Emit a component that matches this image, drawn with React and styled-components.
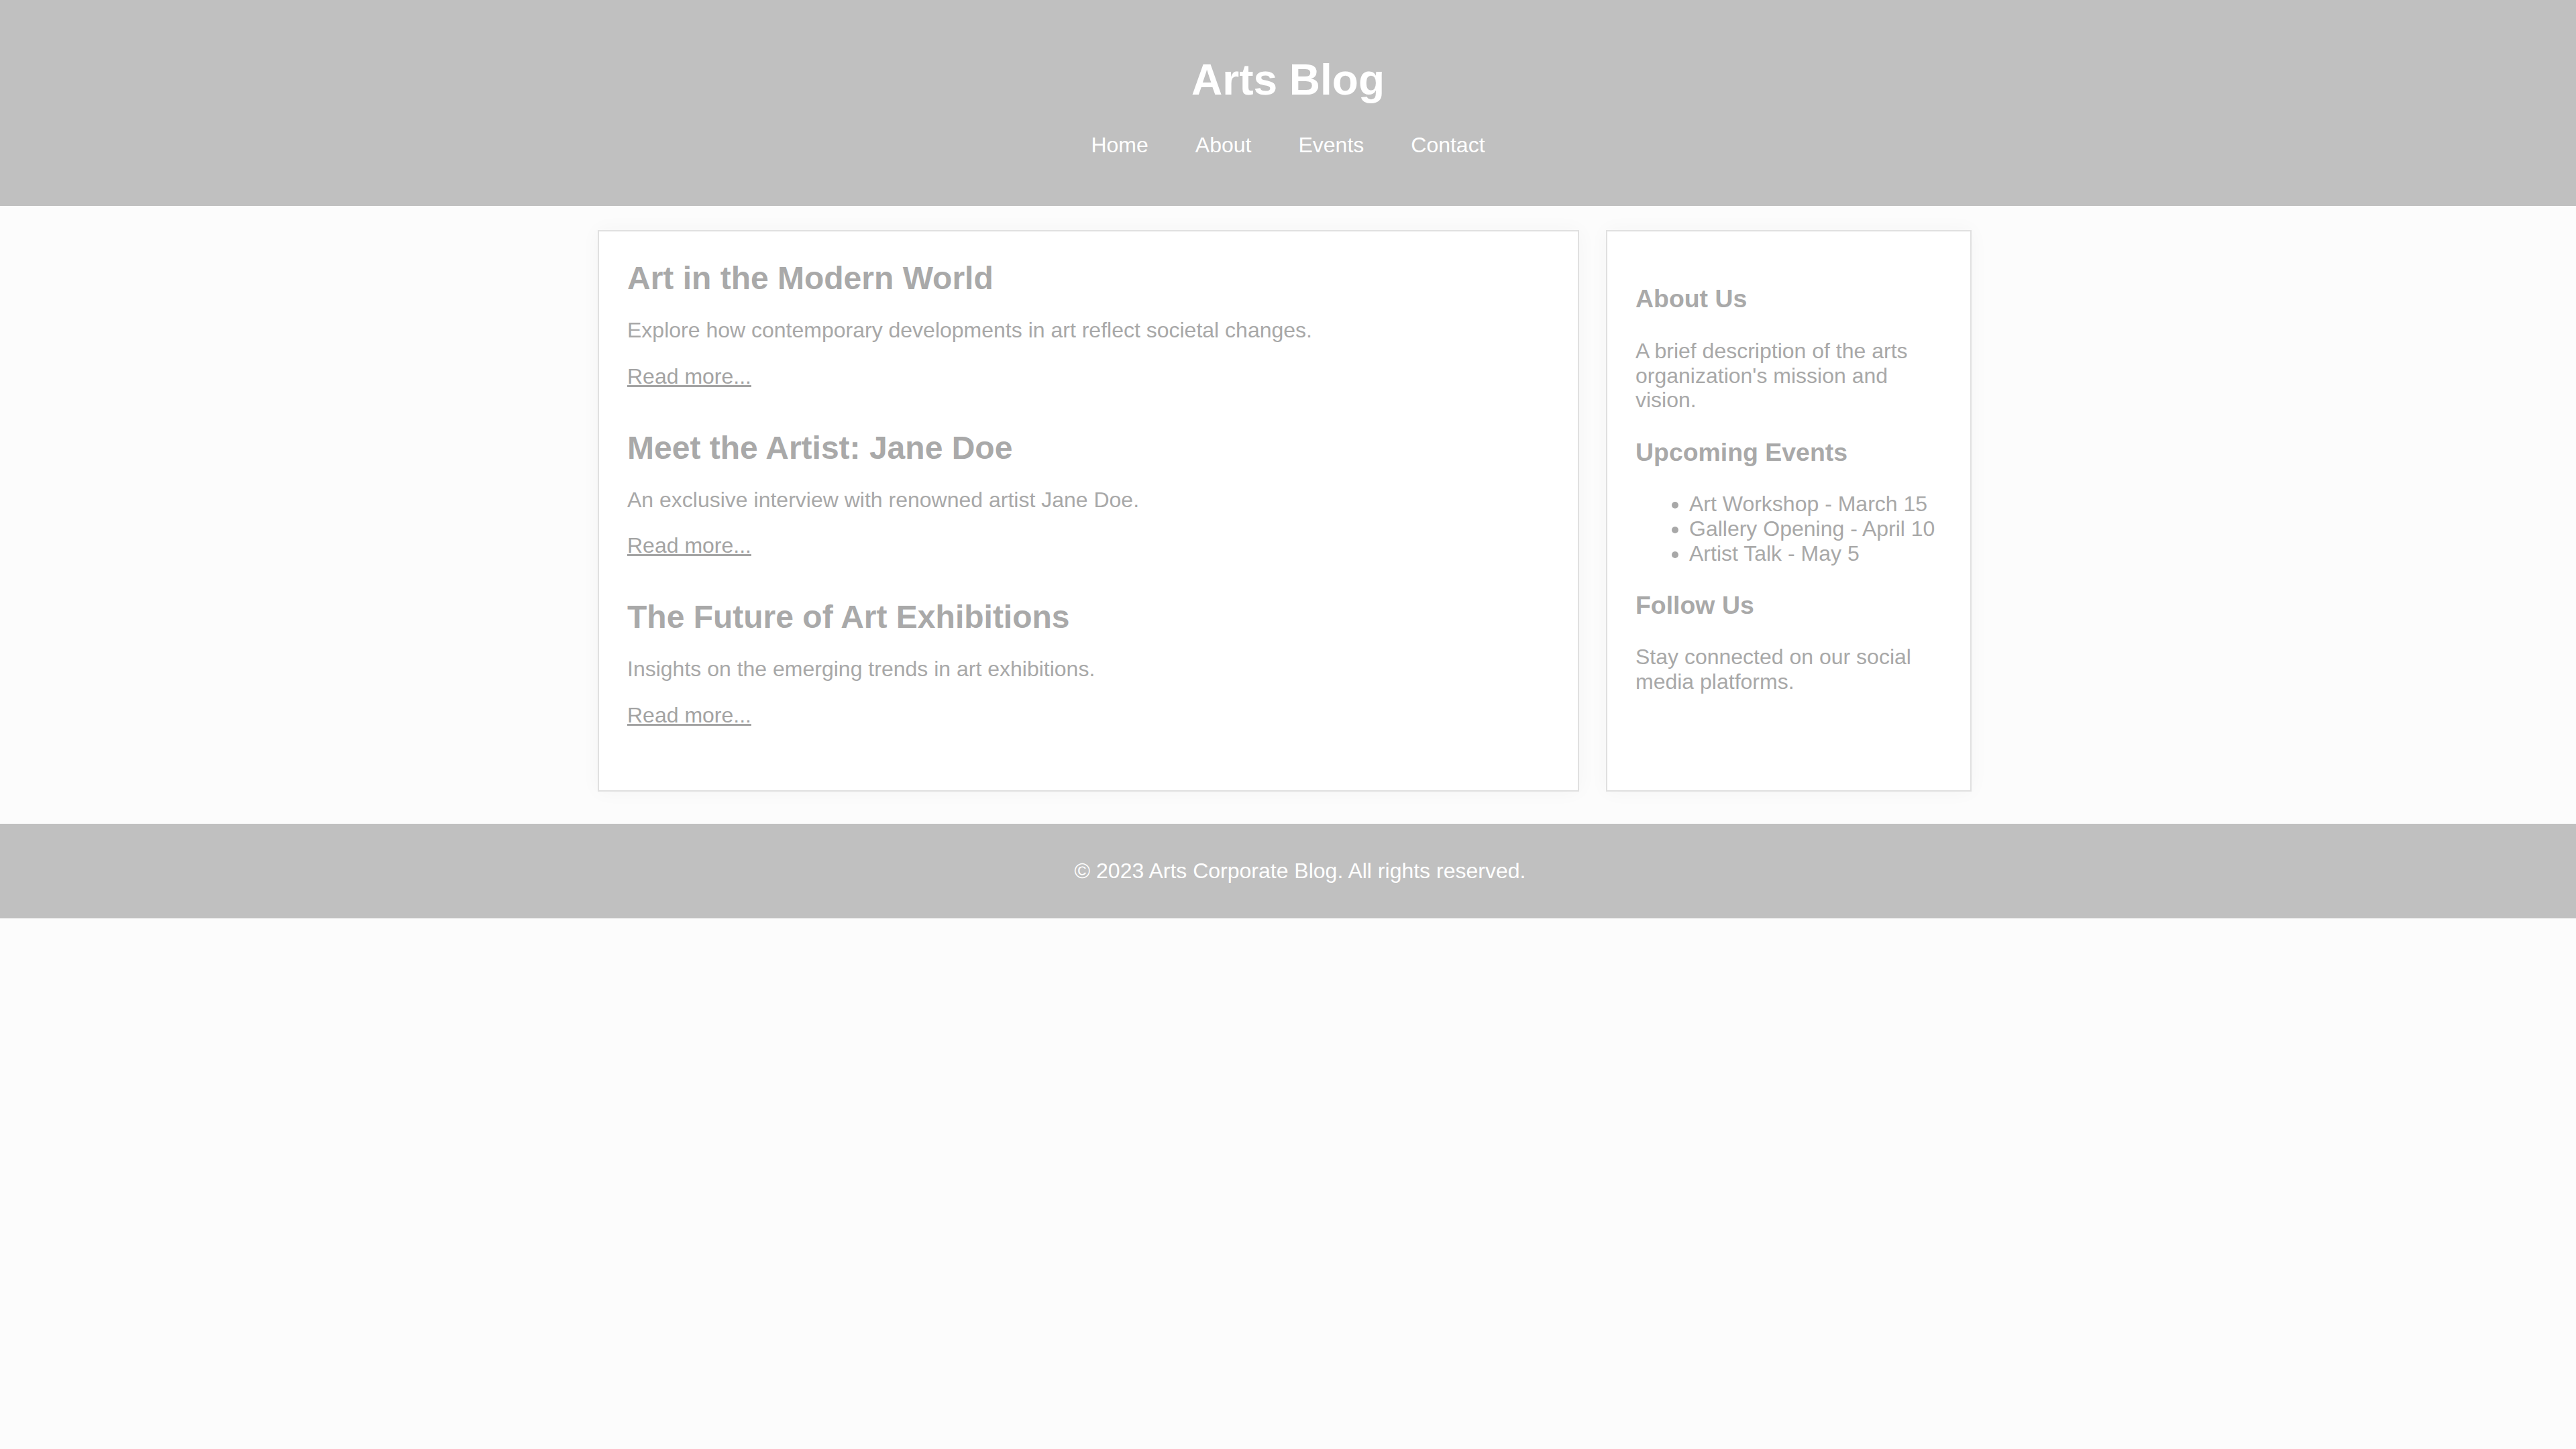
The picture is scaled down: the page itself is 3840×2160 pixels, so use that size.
import React from 'react'
import styled, { createGlobalStyle } from 'styled-components'

const GlobalStyle = createGlobalStyle`
  html, body {
    margin: 0;
    padding: 0;
  }

  body {
    background: #fcfcfc;
    font-family: "Liberation Sans", Arial, Helvetica, sans-serif;
    font-size: 32px;
    color: #ababab;
  }
`

const Header = styled.header`
  background: #c0c0c0;
  color: #fff;
  text-align: center;
  padding: 40px;
`

const SiteTitle = styled.h1`
  font-size: 64px;
  font-weight: bold;
  margin: 42px 0;
`

const NavList = styled.ul`
  list-style: none;
  margin: 32px 0;
  padding: 0;
  display: flex;
  justify-content: center;
  gap: 70px;
`

const NavLink = styled.a`
  color: #fff;
  text-decoration: none;
`

const Layout = styled.div`
  display: flex;
  align-items: stretch;
  gap: 40px;
  max-width: 2048px;
  padding-right: 10px;
  margin: 36px auto 48px;
`

const Card = styled.section`
  flex: ${props => props.grow};
  background: #fff;
  border: 2px solid #e0e0e0;
  padding: 42px 40px 33px 42px;
  box-shadow: 0 0 28px rgba(0, 0, 0, 0.035);
`

const Post = styled.article`
  margin-bottom: 60px;
`

const PostTitle = styled.h2`
  font-size: 48px;
  font-weight: bold;
  color: #a9a9a9;
  margin: 0 0 20px;
`

const Text = styled.p`
  margin: 32px 0;
  color: #a8a8a8;
  line-height: 1.15;
`

const ReadMore = styled.a`
  color: #a3a3a3;
  text-decoration: underline;
`

const SideTitle = styled.h3`
  font-size: 37.44px;
  font-weight: bold;
  color: #a9a9a9;
  margin: 37.44px 0;
`

const EventList = styled.ul`
  margin: 32px 0;
  padding-left: 80px;
  color: #a8a8a8;
  line-height: 1.15;
`

const Footer = styled.footer`
  background: #c0c0c0;
  color: #fff;
  text-align: center;
  padding: 20px 0 20px 36px;
`

const FooterText = styled.p`
  margin: 32px 0;
`

const posts = [
  {
    title: 'Art in the Modern World',
    summary: 'Explore how contemporary developments in art reflect societal changes.'
  },
  {
    title: 'Meet the Artist: Jane Doe',
    summary: 'An exclusive interview with renowned artist Jane Doe.'
  },
  {
    title: 'The Future of Art Exhibitions',
    summary: 'Insights on the emerging trends in art exhibitions.'
  }
]

const events = [
  'Art Workshop - March 15',
  'Gallery Opening - April 10',
  'Artist Talk - May 5'
]

const navItems = ['Home', 'About', 'Events', 'Contact']

export default function App () {
  return (
    <>
      <GlobalStyle />
      <Header>
        <SiteTitle>Arts Blog</SiteTitle>
        <nav>
          <NavList>
            {navItems.map(item => (
              <li key={item}>
                <NavLink href='#'>{item}</NavLink>
              </li>
            ))}
          </NavList>
        </nav>
      </Header>

      <Layout>
        <Card grow={3}>
          {posts.map(post => (
            <Post key={post.title}>
              <PostTitle>{post.title}</PostTitle>
              <Text>{post.summary}</Text>
              <Text>
                <ReadMore href='#'>Read more...</ReadMore>
              </Text>
            </Post>
          ))}
        </Card>

        <Card as='aside' grow={1}>
          <SideTitle>About Us</SideTitle>
          <Text>A brief description of the arts organization's mission and vision.</Text>
          <SideTitle>Upcoming Events</SideTitle>
          <EventList>
            {events.map(ev => <li key={ev}>{ev}</li>)}
          </EventList>
          <SideTitle>Follow Us</SideTitle>
          <Text>Stay connected on our social media platforms.</Text>
        </Card>
      </Layout>

      <Footer>
        <FooterText>© 2023 Arts Corporate Blog. All rights reserved.</FooterText>
      </Footer>
    </>
  )
}
